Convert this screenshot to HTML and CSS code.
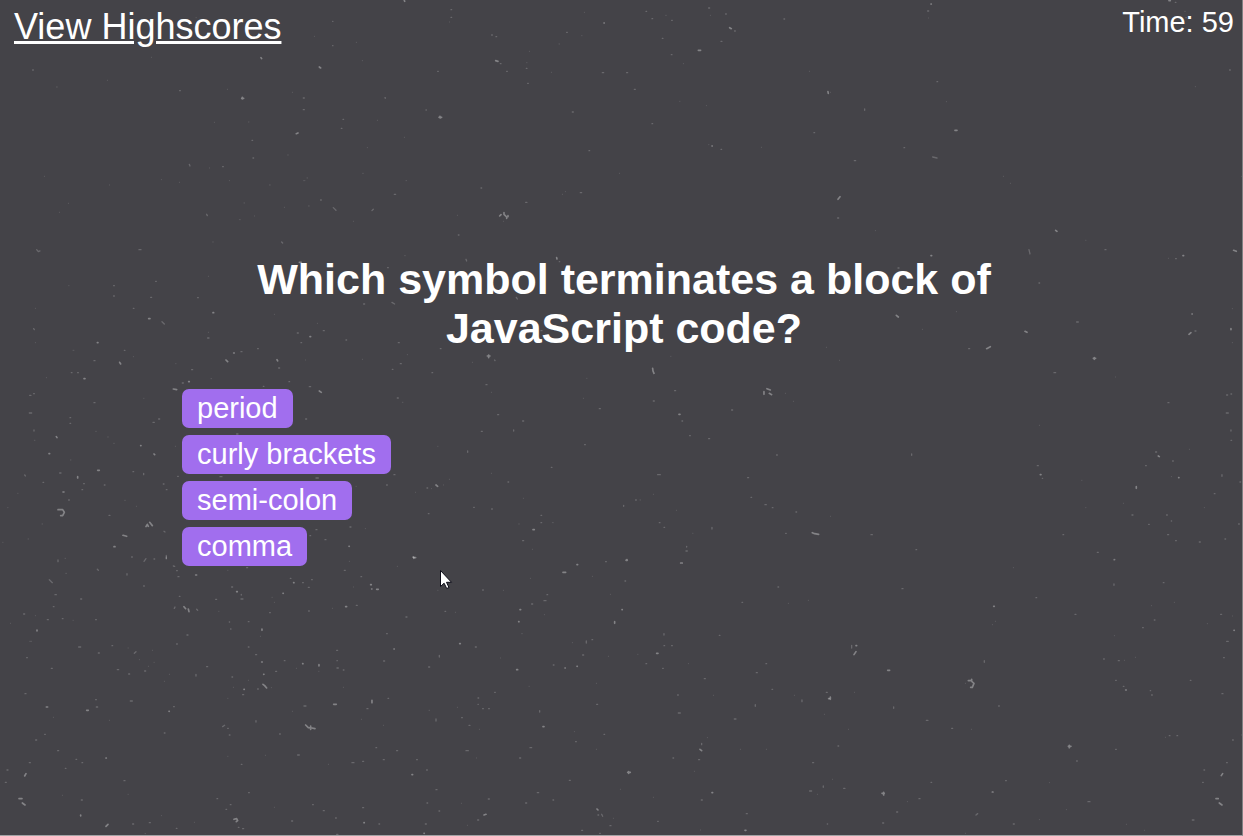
FILE: index.html
```html
<!DOCTYPE html>
<html lang="en">
<head>
<meta charset="utf-8">
<title>Code Quiz</title>
<link rel="stylesheet" href="styles.css">
</head>
<body>
<div class="page">
  <svg class="dust" aria-hidden="true">
    <g transform="scale(.3333)">
      <path class="faint" d="M454 172h1M322 241h1M169 261h3M682 268h1M877 277h1M643 367h1M745 366h2M1132 361h1M1213 412h1M1102 443h1M863 465h2M133 529h1M628 504h1M688 542h1M484 539h1M538 547h1M328 555h1M205 610h1M178 637h1M853 622h1M763 648h1M1060 664h1M1087 182h1M1069 127h1M943 109h1M808 555h3M911 542h4M921 534h2M1218 542h2M925 618h3M732 609h2M718 659h3M638 726h2M1214 767h2M625 829h1M588 53h1M1088 520h2"/>
      <path class="soft" d="M98 210h2M539 272h2M998 64h1M998 137h1M910 294h3M910 329h3M1029 358h2M1024 385h2M1155 293h1v2M756 421h2M759 474h2M668 500h2M568 493l2 5M620 643l2 4M962 600h2M1000 623l8 8M1120 628l-4 4M1183 583h4M845 726l3 3M417 749h6M1163 803h2M110 749l5 6 5-2"/>
      <path class="bright" d="M1213 1l1 3M783 173l2 3M958 201l4 3M727 292v5M725 295h6M889 401l5-2M898 787h6"/>
    </g>
    <g transform="translate(415) scale(.3333)">
      <path class="faint" d="M103 66h1M508 37h1M500 107h1M343 154h1M335 188h1M409 217h1M432 132h2M805 191h1M752 46h2M886 46h1M794 304h1M874 317h1M1183 214h1M1039 442h1M613 520h1M451 575h1M442 583h1M127 646h1M265 664h1M881 434h1"/>
      <path class="soft" d="M108 29h2M108 52h2M230 105h2M243 110h2M455 97h2M334 205h2M275 214h2M68 214h2M338 250h2M562 218h4M635 218h3M658 268h3M472 336h3M522 452h2M198 564h2M496 578h4M332 607h4M693 34h2M711 56h2M770 61h2M742 115h2M769 164h2M881 24h3M932 42h2M959 93h2M918 124h3M1107 57h2M711 371h2M918 448h2M1197 398h2M33 330h1M130 705h2M153 778l2 5M433 785h1M256 191h2"/>
      <path class="bright" d="M567 69h1M242 182l7 2M850 151h7M944 83l5 3M75 349l1 5M72 352h8M891 438h1M1239 275l1 5M254 648l4-4M267 638v5l8 8v4M279 647v3M425 773l1 4"/>
    </g>
    <g transform="translate(830) scale(.3333)">
      <path class="faint" d="M295 54h1M349 305h1M1096 260h1M520 529h1M541 550h1M136 692h1M767 721h1M1015 775h1M1 277h1M1064 34h2M1235 529h1"/>
      <path class="soft" d="M293 33h3M321 245h2M104 327v4M222 443h2M73 482h4M308 471l13 3M23 654h3M597 749l3 13M825 749h3M1037 776h2M1036 7h2M1199 210h2M1068 53h1M204 804h3"/>
      <path class="bright" d="M303 12h1M1017 2h4M375 391h6M24 598l6-8M677 691l4 3M303 767h2M1059 767h2M1211 751l8 3"/>
    </g>
    <g transform="translate(0 280) scale(.3333)">
      <path class="faint" d="M206 17h1M106 85h1M106 188h1M219 211h3M139 293h1M823 103h1M625 157h1M952 130h1M1087 238h1M916 240h1M527 251h1M400 230h1M431 355h1M287 454h2M103 481h2M323 471h2M341 490h2M526 499h1M211 540h2M53 640h1M23 683h1M8 787h1M126 732h2M84 777h2M374 661h2M409 679h1M1068 619h1M1096 746h1M1207 367h2M1222 224h1M633 296h2"/>
      <path class="soft" d="M341 17h2M341 48h2M452 52h3M467 4h2M593 53h2M400 85h2M486 125l7 7M101 146l2 3M373 211h2M282 242h3M214 278h2M233 278h2M282 368h3M89 346h4M101 341h2M88 399h7M102 450v3M210 413h2M210 430h2M476 417h3M459 427h4M623 174h4M892 159h3M903 188h2M970 152h3M1038 180h2M1195 188h3M1201 251h3M1177 268h2M773 206h2M723 215h3M836 264h3M575 269h3M547 309h3M867 305h2M790 319h2M928 320h4M1192 354h3M1091 72h3M917 417h3M710 462h4M74 585l2 3M129 607h2M179 579h4M251 611h2M246 629h2M313 615h2M399 575h2M431 580v4M533 589h2M490 612h2M499 629h2M660 590h6M948 594h7M1182 584h3M1160 615h2M327 706h3M492 754l3 2M948 749h3M930 767h2M975 779h3M1050 741h3M395 831h2M462 837h2M499 826v10M206 660h2M1176 67l8 5"/>
      <path class="bright" d="M639 98h2M446 116h4M292 188h2M252 296h3M359 247l3 5M678 240l5 5M701 219h2M831 239l2 4M930 170h2M566 305h2M520 327l10 2M958 333l6 4M169 470l2 3M147 521h2M422 497h1M462 522l2 2M233 590v4M293 571h5M189 636h3M174 689h14l5 8-5 10h-6M438 740l4-7 3 6M449 727l8 10M369 766l11 3M342 800h3M1047 799h1M1240 832h3"/>
    </g>
    <g transform="translate(415 280) scale(.3333)">
      <path class="faint" d="M172 247h1M229 337h1M515 295h1M505 355h1M767 229h1M1234 202h1M1111 340h1M1135 364h1M68 499h1M229 580h1M103 598h1M85 615h1M1 637h1M325 655h1M715 643h1M784 691h1M833 760h1M352 808h1M412 728h3M311 732h2M675 660h2M49 626h1"/>
      <path class="soft" d="M76 206h2M51 278h2M239 240l1 2M213 314h3M248 404h3M323 423h3M296 450v3M199 454h3M158 513v4M36 624h2M279 606h2M176 682h2M230 687h2M40 701h2M378 706h2M378 728h2M323 782h3M409 562h2M509 494h2M553 386h3M715 363h3M779 332h3M801 423h2M824 467h2M881 476h3M950 390h3M728 584h8M626 676v3M662 660h2M998 593h3M1008 652h2M1050 674h4M1072 683h2M1143 696h2M1085 525h2M891 742v5M733 728h2M747 742h2M815 799v2M813 813h4M1112 760h2M634 838h3M304 52l3 5M378 152h3"/>
      <path class="bright" d="M217 228h8M221 225v8M713 265l1 8 3 7M792 403h3M1047 335v8M1056 326l10 4M1063 340l7 4M63 615l5 4M354 749h4M1192 758l7 3 12 2M1 833h1"/>
    </g>
    <g transform="translate(830 280) scale(.3333)">
      <path class="faint" d="M379 95h1M277 148h1M28 241h1M856 291h1M628 436h1M755 601h1M767 683h1M880 670h1M1078 508h1M1024 590h1M1123 683h1M1207 86h1M1207 188h1M1 709h1"/>
      <path class="soft" d="M627 9h2M740 126h5M416 206h3M672 278h5M1014 368h3M1190 345h3M1203 342h2M1189 399h6M1203 450v3M1203 481h2M1095 153h3M245 522v4M622 557h3M637 595h1M947 557h2M977 516h3M1028 543h2M1176 584v5M1230 606h2M1153 641h2M906 705h3M1010 705h2M1024 723h1M956 733h2M699 764h2M123 764h4M258 809h2M1013 764h3M1037 782h2M1108 786h3M1185 777h2M1226 732h2M802 817h3M852 838h3"/>
      <path class="bright" d="M199 106l6 5M585 154l6 3M470 206l11-6M1086 102h1M1077 163l6-5M1203 146v3M790 235h7M793 233v5M631 584h2M985 528l3 2M1046 593h1M919 620v5"/>
    </g>
    <g transform="translate(0 556) scale(.3333)">
      <path class="faint" d="M195 7h2M197 52h3M31 202h1M89 256h6M219 193h1M106 179h1M384 276h1M457 283h1M418 311h1M462 319h1M445 331h1M508 355h1M493 376h1M160 484h1M328 493h1M187 718h1M384 715h1M484 779h1M583 799h1M683 601h1M796 598h1M985 625h1M823 754h1M683 427h1M700 394h1M745 373h1M889 337h1M956 346h1M1030 394h1M1084 490h1M1150 508h1M877 466h1M683 43h1M816 124h1M823 139h1M656 166h1M997 157h1M781 241h1M1048 16h1M1192 31h1M1060 93h1M814 395h1M435 833h2"/>
      <path class="soft" d="M174 12v5M432 16l6-8M292 40l3 3M381 53v4M431 90h2M148 71l9 9M165 116h4M242 129h3M160 152h2M71 174h3M142 191h3M187 188h2M287 191h2M80 305h2M236 273h6M295 291h3M336 269h2M154 337h3M352 341h4M386 354h3M434 345h3M561 237h3M530 264h2M403 292l5-5M499 3v5M520 30l4 1M530 44h2M534 62h3M647 130h3M695 93h3M724 115v2M723 129h6M538 121h2M525 153l-2 4M590 160l3 3M688 198h1M692 219h1M745 197h2M745 273h2M767 296h3M853 314h2M827 346h3M620 332h3M588 355v5M696 363h2M773 399h2M728 416h3M287 431h2M289 453h4M391 435h6M521 452h2M75 413h3M134 535h2M107 552h3M173 584h3M228 610h2M88 620h3M246 620h2M196 637h2M21 642h3M16 679h3M372 674h3M493 531h2M668 512l6-4M683 517h2M688 537h2M768 494v4M839 534h2M893 597h5M724 625h2M746 710h2M651 728h2M691 746h2M678 760h2M448 800h3M398 804h3M244 732h3M715 814h2M728 818h3M529 817h2M875 795h3M938 746h2M970 764h3M1007 786h2M1010 835h4M1088 755h3M1137 804h2M1088 616h3M1150 611h3M1056 620h6M1128 575h2M1190 584h3M1101 458h3M1164 427h2M912 450h6M1030 342h2M1011 314h1M1011 336h4M1010 283h3M1151 315h3M1160 233h2M1218 183h3M1069 148h3M1083 62h2M1033 43h3M935 71h2M908 80h2M925 94h3M871 67h2M926 165h2M809 170h2M740 35h3"/>
      <path class="bright" d="M587 57h3M552 152l5 6M565 159l2 8M710 107h2M111 222v3M849 112h1M881 80h1M1037 152h3M786 219v4M785 318h2M791 355h1M908 323h1M957 326v4M732 400h1M789 385l5 4 6 7M139 453h4M260 463h5M507 466h1M318 606h1M74 660l4-7M57 728h9M67 741l8 6M242 777v3M318 811l6-6M702 790l8-2 3 6-4 3M917 507l8 8 11 1 9 2M932 510v10M1001 445h8M1116 433v7M1182 279h1M1112 86h2M1115 99h1M1130 100h5M1092 800h1M1236 656h2M1240 3l2 4"/>
    </g>
    <g transform="translate(415 556) scale(.3333)">
      <path class="faint" d="M346 67h1M532 61h1M586 115h1M265 103h1M68 103h1M121 169h1M388 176h1M320 233h2M256 306h1M472 260h1M580 301h1M668 295h1M820 323h1M544 382h1M342 391h1M127 454h1M193 520h1M478 527h1M544 580h1M184 606h1M139 742h1M157 808h1M616 700h1M715 724h1M877 545h1M976 580h1M1054 580h1M838 646h1M895 418h1M1138 418h1M1228 475h1M1120 142h1M1180 133h1M856 822h1M1207 715h1M595 787h1M42 463h2"/>
      <path class="soft" d="M572 17h2M630 75h2M203 102h2M90 166h2M396 116h2M387 134h6M350 144h3M181 273h3M73 298v5M41 333h3M415 327h2M503 297h3M514 255v6M531 251h2M747 233v4M747 269h2M770 269h2M693 323h2M743 337h2M913 238h2M981 139h2M1089 93h2M1053 323h2M1024 350h3M868 368h3M788 417h2M790 471h6M958 489h5M1071 400h2M1161 432v5M1021 446v5M1234 409h3M189 426h2M189 445h1M203 458h2M221 458h2M239 409h2M140 485h2M63 489v6M162 508h3M374 464v4M545 445h3M567 535h2M482 557h2M345 575h5M314 606h3M153 584h7M5 611h2M35 642h2M63 701h3M36 741h2M72 765h2M31 804h3M220 729h3M188 792h3M332 741h3M367 710h4M414 732h2M463 673h3M500 823h3M585 809h3M728 796h2M860 562v4M851 611h3M774 606h2M859 732h3M994 773h3M1193 620h3M1184 705h6M1225 690v4M1237 804h1M554 832h2M549 777h2M560 775l3 6"/>
      <path class="bright" d="M486 26h2M633 13h4M797 21h5M444 49h8M315 161h2M311 197h1M621 161h1M599 197v5M134 263h2M305 341h3M450 336h1M486 331h1M725 292h4M384 512h3M641 647v5M638 649h8M855 580l5 4M546 759l3 3M207 777l6-2M891 710h2M990 823h3M27 832h1M1241 428h2"/>
    </g>
    <g transform="translate(830 556) scale(.3333)">
      <path class="faint" d="M550 35h1M487 206h1M496 196h1M73 409h1M55 520h1M424 520h1M406 382h1M964 149h1M1033 139h1M1132 203h1M1207 180h1M853 239h1M916 304h1M883 313h1M1006 544h1M7 670h1M232 737h1M658 680h1M709 761h1M628 791h1M889 805h1M943 823h1M406 832h1M1234 537h2"/>
      <path class="soft" d="M216 98h3M618 125h2M735 175h3M852 84v4M852 12h2M1000 80h2M973 192h2M938 215h2M1172 175h3M1190 256h5M1181 305h2M821 309h2M865 314h3M857 373h2M880 391h2M961 404h1M965 417h2M1081 373h2M1176 413h3M1018 539h2M1041 539h2M1208 552h2M857 580h2M740 615h2M1190 620h2M1122 642h2M1118 679h2M1087 792h5M774 737h6M550 804h3M438 777l5-4M527 674h2M303 679h2M267 728h3M200 768h3M158 801h3M41 697h4M24 570h2M191 453v4M289 493h5M365 517h3M506 450h2M463 314v5M65 268v8"/>
      <path class="bright" d="M491 151h2M78 269h2M72 296l6-9M173 343h6M1 423v7M415 374h10v-4M426 377l6 5-5 12h-5M718 568v7M715 571h8M887 402h2M1212 223h1M1174 659l4-6M1158 728h7M1168 741l8 6M487 708h2M156 712h7M161 709v8"/>
    </g>
  </svg>

  <header class="topbar">
    <a class="scores" href="#">View Highscores</a>
    <div class="timer">Time: <span>59</span></div>
  </header>

  <main class="quiz">
    <h1 class="question">Which symbol terminates a block of JavaScript code?</h1>
    <div class="choices">
      <button class="choice" type="button">period</button>
      <button class="choice" type="button">curly brackets</button>
      <button class="choice" type="button">semi-colon</button>
      <button class="choice" type="button">comma</button>
    </div>
  </main>

  <svg class="cursor" viewBox="0 0 13 20" aria-hidden="true">
    <path d="M.5 .5v16l3.600-3.300 2.600 5.300 2.300-1-2.500-5.200h5z"/>
  </svg>
</div>
</body>
</html>
```
FILE: styles.css
```css
* {
  box-sizing: border-box;
}

body {
  margin: 0;
  font-family: "Liberation Sans", Arial, sans-serif;
  color: #fff;
  background: #444348;
}

.page {
  position: relative;
  min-height: 100vh;
  overflow: hidden;
  border-right: 1px solid #808083;
  border-bottom: 1px solid #a3a3a5;
}

.dust {
  position: absolute;
  inset: 0;
  width: 100%;
  height: 100%;
  fill: none;
  stroke: #fff;
  stroke-linecap: round;
  stroke-linejoin: round;
  pointer-events: none;
}

.faint {
  stroke-width: 3;
  opacity: 0.13;
}

.soft {
  stroke-width: 4;
  opacity: 0.2;
}

.bright {
  stroke-width: 5;
  opacity: 0.34;
}

.topbar {
  position: relative;
  display: flex;
  justify-content: space-between;
  align-items: flex-start;
  padding: 6px 8px 0 14px;
}

.scores {
  color: #fff;
  font-size: 36px;
  line-height: 42px;
}

.timer {
  font-size: 29px;
  line-height: 33px;
}

.quiz {
  position: relative;
  max-width: 890px;
  margin: 207px auto 0;
  padding-left: 6px;
}

.question {
  margin: 0 0 36px;
  font-size: 43px;
  line-height: 49px;
  text-align: center;
}

.choices {
  display: flex;
  flex-direction: column;
  align-items: flex-start;
  gap: 7px;
}

.choice {
  padding: 3px 15px;
  border: 0;
  border-radius: 7px;
  background: #a16eee;
  color: #fff;
  font-family: inherit;
  font-size: 29px;
  line-height: 33px;
  cursor: pointer;
}

.cursor {
  position: absolute;
  left: 440px;
  top: 570px;
  width: 13px;
  height: 20px;
  fill: #fff;
  stroke: #0c0c18;
  pointer-events: none;
}
```
